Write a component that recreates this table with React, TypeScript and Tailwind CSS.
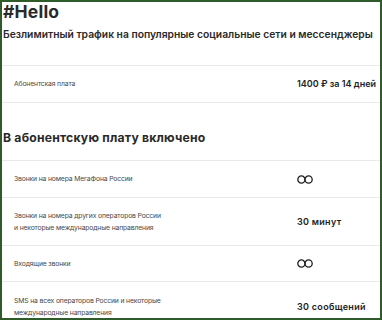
import React from 'react';

type Row = {
  label: string[];
  value?: string;
  unlimited?: boolean;
  height: string;
};

const Infinity = () => (
  <svg width="16" height="9" viewBox="0 0 16 9" fill="none" stroke="#1f1f1f" strokeWidth="1.3">
    <circle cx="4.4" cy="4.5" r="3.6" />
    <circle cx="11.6" cy="4.5" r="3.6" />
  </svg>
);

const rows: Row[] = [
  { label: ['Звонки на номера МегаФона России'], unlimited: true, height: 'h-[37px]' },
  {
    label: ['Звонки на номера других операторов России', 'и некоторые международные направления'],
    value: '30 минут',
    height: 'h-[48px]',
  },
  { label: ['Входящие звонки'], unlimited: true, height: 'h-[36px]' },
  {
    label: ['SMS на всех операторов России и некоторые', 'международные направления'],
    value: '30 сообщений',
    height: 'h-[50px]',
  },
];

const TariffRow = ({ row }: { row: Row }) => (
  <div className={`flex items-center border-t border-[#e9e9e9] ${row.height}`}>
    <div className="w-[295px] pl-[12px] text-[6.8px] leading-[11.5px] tracking-[-0.15px] text-[#4a4a4a]">
      {row.label.map((line) => (
        <div key={line}>{line}</div>
      ))}
    </div>
    <div className="flex-1 whitespace-nowrap text-[9px] font-semibold tracking-[0.3px] text-[#222]">
      {row.unlimited ? <Infinity /> : row.value}
    </div>
  </div>
);

export default function App() {
  return (
    <div className="w-[382px] h-[320px] overflow-hidden border-2 border-[#2f5b2b] bg-white font-['Inter',sans-serif] text-[#222]">
      <div className="pl-[1px] text-[17.5px] font-bold leading-[20px] tracking-[0.2px] text-[#2a2a2a]">
        #Hello
      </div>
      <div className="mt-[5px] whitespace-nowrap pl-[1px] text-[10.3px] font-semibold leading-[14px] text-[#2a2a2a]">
        Безлимитный трафик на популярные социальные сети и мессенджеры
      </div>

      <div className="mt-[24px] flex h-[37px] items-center border-t border-[#e9e9e9]">
        <div className="w-[295px] pl-[12px] text-[6.8px] tracking-[-0.15px] text-[#4a4a4a]">Абонентская плата</div>
        <div className="flex-1 whitespace-nowrap text-[9px] font-semibold text-[#222]">1400 ₽ за 14 дней</div>
      </div>

      <div className="flex h-[58px] items-end border-t border-[#e9e9e9] pb-[14px] pl-[1px] text-[12.2px] font-bold leading-[16px] tracking-[0.2px] text-[#2a2a2a]">
        В абонентскую плату включено
      </div>

      {rows.map((row) => (
        <TariffRow key={row.label[0]} row={row} />
      ))}
    </div>
  );
}
